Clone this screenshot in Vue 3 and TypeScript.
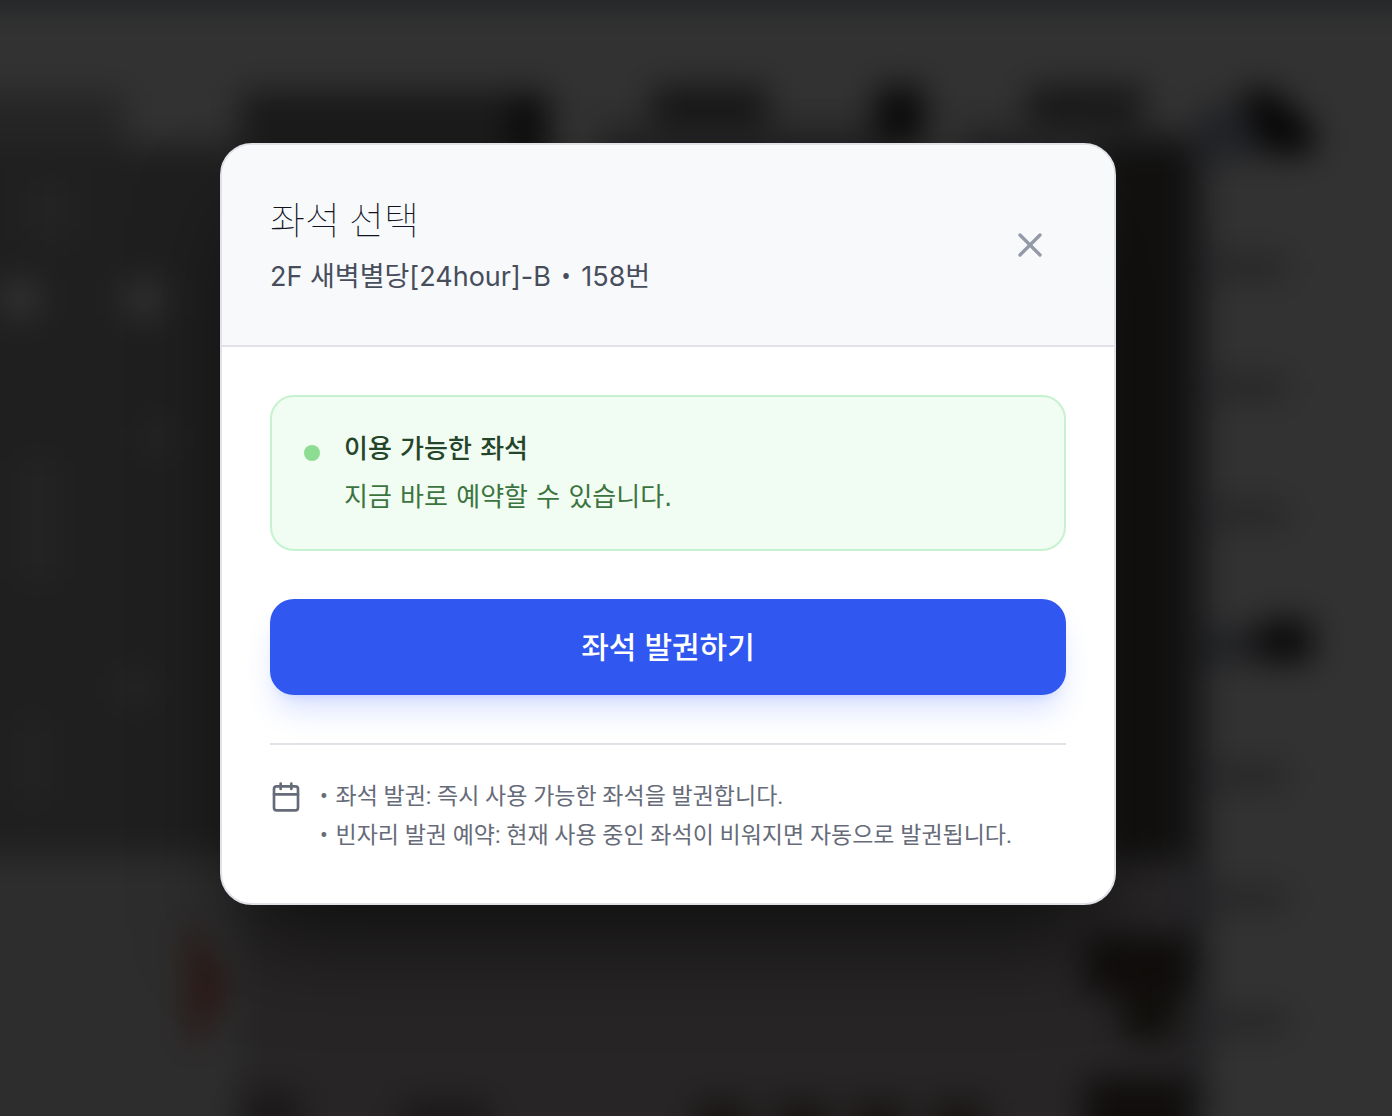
<script setup lang="ts">
import { ref } from 'vue'

interface Smudge {
  x: number
  y: number
  w: number
  h: number
  fill: string
}

const seat = ref({ room: '2F 새벽별당[24hour]-B', number: 158 })

const notes: string[] = [
  '좌석 발권: 즉시 사용 가능한 좌석을 발권합니다.',
  '빈자리 발권 예약: 현재 사용 중인 좌석이 비워지면 자동으로 발권됩니다.',
]

// Dimmed seat map behind the dialog, reduced to blurred blocks
const smudges: Smudge[] = [
  { x: -60, y: -60, w: 1520, h: 66, fill: '#202226' },
  { x: -60, y: 92, w: 185, h: 60, fill: '#252525' },
  { x: -60, y: 145, w: 310, h: 710, fill: '#1f1f1f' },
  { x: -60, y: 855, w: 300, h: 340, fill: '#2d2d2d' },
  { x: 240, y: 855, w: 950, h: 340, fill: '#272526' },
  { x: 240, y: 90, w: 310, h: 200, fill: '#1b1b1b' },
  { x: 512, y: 98, w: 32, h: 60, fill: '#0b0b0b' },
  { x: 600, y: 126, w: 280, h: 80, fill: '#232325' },
  { x: 652, y: 86, w: 116, h: 38, fill: '#171717' },
  { x: 876, y: 86, w: 48, h: 60, fill: '#0b0b0b' },
  { x: 960, y: 128, w: 240, h: 60, fill: '#232325' },
  { x: 1028, y: 86, w: 116, h: 36, fill: '#171717' },
  { x: 1100, y: 145, w: 92, h: 715, fill: '#121110' },
  { x: 1190, y: 130, w: 18, h: 1000, fill: '#1f2023' },
  { x: 1200, y: 105, w: 60, h: 55, fill: '#212226' },
  { x: 1200, y: 255, w: 88, h: 24, fill: '#262628' },
  { x: 1200, y: 375, w: 88, h: 24, fill: '#262628' },
  { x: 1200, y: 502, w: 88, h: 24, fill: '#262628' },
  { x: 1200, y: 630, w: 66, h: 32, fill: '#1f2023' },
  { x: 1258, y: 620, w: 54, h: 42, fill: '#0a0a0a' },
  { x: 1200, y: 764, w: 88, h: 24, fill: '#262628' },
  { x: 1200, y: 886, w: 88, h: 24, fill: '#262628' },
  { x: 1200, y: 1010, w: 88, h: 24, fill: '#262628' },
  { x: 1085, y: 935, w: 108, h: 60, fill: '#100d0c' },
  { x: 1122, y: 990, w: 56, h: 52, fill: '#12100d' },
  { x: 1085, y: 1078, w: 108, h: 90, fill: '#100d0c' },
  { x: 695, y: 1100, w: 54, h: 60, fill: '#181412' },
  { x: 775, y: 1100, w: 54, h: 60, fill: '#181412' },
  { x: 852, y: 1100, w: 54, h: 60, fill: '#181412' },
  { x: 932, y: 1100, w: 54, h: 60, fill: '#181412' },
  { x: 240, y: 1090, w: 60, h: 70, fill: '#1b1819' },
  { x: 400, y: 1100, w: 90, h: 60, fill: '#1b1819' },
  { x: 2, y: 282, w: 36, h: 34, fill: '#343434' },
  { x: 126, y: 282, w: 36, h: 34, fill: '#343434' },
  { x: 24, y: 180, w: 50, h: 60, fill: '#232323' },
  { x: 20, y: 460, w: 36, h: 120, fill: '#242424' },
  { x: 20, y: 720, w: 24, h: 80, fill: '#242424' },
  { x: 145, y: 425, w: 24, h: 26, fill: '#282828' },
  { x: 120, y: 675, w: 30, h: 26, fill: '#282828' },
]
</script>

<template>
  <div class="screen">
    <svg class="backdrop" viewBox="0 0 1392 1116" preserveAspectRatio="none" aria-hidden="true">
      <defs>
        <filter
          id="soften"
          x="-10%"
          y="-10%"
          width="120%"
          height="120%"
          color-interpolation-filters="sRGB"
        >
          <feGaussianBlur stdDeviation="16" />
        </filter>
      </defs>
      <g filter="url(#soften)">
        <rect x="-80" y="-80" width="1552" height="1276" fill="#323232" />
        <rect
          v-for="(s, i) in smudges"
          :key="i"
          :x="s.x"
          :y="s.y"
          :width="s.w"
          :height="s.h"
          :fill="s.fill"
        />
        <path d="M1240 90h32l42 38v26h-48z" fill="#060606" />
        <path d="M188 915l40 70-38 72z" fill="#2a1614" />
      </g>
    </svg>

    <section class="dialog" role="dialog" aria-modal="true" aria-labelledby="dialog-title">
      <header class="head">
        <div class="heading">
          <h2 id="dialog-title">좌석 선택</h2>
          <p>{{ seat.room }} <span class="bullet">•</span> {{ seat.number }}번</p>
        </div>
        <button class="close" type="button" aria-label="닫기">
          <svg viewBox="0 0 24 24" aria-hidden="true"><path d="M18 6 6 18M6 6l12 12" /></svg>
        </button>
      </header>

      <div class="body">
        <div class="status">
          <span class="dot"></span>
          <div>
            <p class="status-title">이용 가능한 좌석</p>
            <p class="status-text">지금 바로 예약할 수 있습니다.</p>
          </div>
        </div>

        <button class="issue" type="button">좌석 발권하기</button>

        <footer class="notes">
          <svg class="calendar" viewBox="0 0 24 24" aria-hidden="true">
            <path d="M8 2v4M16 2v4M3 10h18" />
            <rect x="3" y="4" width="18" height="18" rx="2" />
          </svg>
          <div>
            <p v-for="note in notes" :key="note"><span class="bullet">•</span> {{ note }}</p>
          </div>
        </footer>
      </div>
    </section>
  </div>
</template>

<style>
body {
  margin: 0;
  background: #323232;
}
</style>

<style scoped>
.screen {
  position: relative;
  display: flex;
  align-items: center;
  justify-content: center;
  box-sizing: border-box;
  min-height: 100vh;
  padding: 0 56px 68px 0;
  overflow: hidden;
  font-family: Inter, 'Noto Sans CJK KR', sans-serif;
}

.backdrop {
  position: absolute;
  inset: 0;
  width: 100%;
  height: 100%;
}

.dialog {
  position: relative;
  box-sizing: border-box;
  width: 100%;
  max-width: 896px;
  overflow: hidden;
  border: 2px solid #e1e2e8;
  border-radius: 32px;
  background: #fff;
  box-shadow: 0 50px 100px -24px rgba(0, 0, 0, 0.65);
}

h2,
p {
  margin: 0;
}

.bullet {
  font-family: Roboto, sans-serif;
}

.head {
  display: flex;
  align-items: center;
  justify-content: space-between;
  padding: 48px;
  border-bottom: 2px solid #e1e2e8;
  background: #f8f9fb;
}

.heading {
  display: flex;
  flex-direction: column;
  gap: 8px;
}

h2 {
  color: #12131f;
  font-family: Roboto, 'Noto Sans CJK KR', sans-serif;
  font-size: 38px;
  font-weight: 100;
  line-height: 56px;
}

.heading p {
  color: #474d5b;
  font-size: 27px;
  line-height: 40px;
}

.heading .bullet {
  margin: 0 3px;
}

.close {
  display: flex;
  padding: 16px;
  border: 0;
  border-radius: 16px;
  background: none;
  color: #9499a8;
  cursor: pointer;
}

svg {
  fill: none;
  stroke: currentColor;
  stroke-width: 2;
  stroke-linecap: round;
  stroke-linejoin: round;
}

.backdrop {
  stroke: none;
}

.close svg {
  width: 40px;
  height: 40px;
}

.body {
  display: flex;
  flex-direction: column;
  gap: 48px;
  padding: 48px;
}

.status {
  display: flex;
  gap: 24px;
  padding: 32px;
  border: 2px solid #c6f2cf;
  border-radius: 24px;
  background: #f1fcf2;
  font-family: 'DejaVu Sans', 'Noto Sans CJK KR', sans-serif;
  font-size: 26px;
}

.dot {
  flex: none;
  width: 16px;
  height: 16px;
  margin-top: 16px;
  border-radius: 50%;
  background: #8cdc91;
}

.status-title {
  margin-bottom: 8px;
  color: #25452a;
  font-weight: 500;
  line-height: 40px;
}

.status-text {
  color: #3c7440;
  line-height: 40px;
}

.issue {
  height: 96px;
  padding: 0 0 4px;
  border: 0;
  border-radius: 24px;
  background: #3157f1;
  box-shadow:
    0 20px 30px -6px rgba(60, 105, 255, 0.2),
    0 8px 12px -8px rgba(60, 105, 255, 0.2);
  color: #fff;
  font: inherit;
  font-size: 30px;
  font-weight: 500;
  cursor: pointer;
}

.notes {
  display: flex;
  gap: 18px;
  padding-top: 32px;
  border-top: 2px solid #e1e2e8;
  color: #666b79;
  font-family: Roboto, 'Noto Sans CJK KR', sans-serif;
  font-size: 23px;
  line-height: 39px;
}

.notes .bullet {
  margin-right: 2px;
}

.calendar {
  flex: none;
  width: 32px;
  height: 32px;
  margin-top: 4px;
}
</style>
